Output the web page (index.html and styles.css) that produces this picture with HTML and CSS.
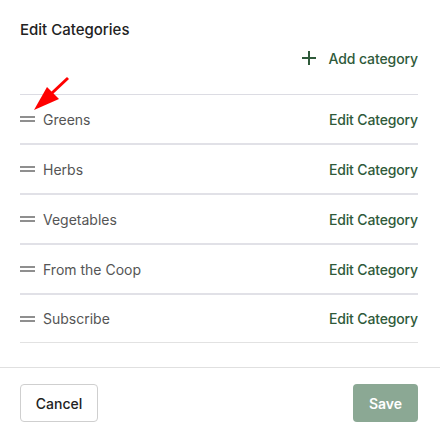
FILE: index.html
```html
<!DOCTYPE html>
<html>
<head>
<meta charset="utf-8">
<link rel="stylesheet" href="styles.css">
</head>
<body>
<div class="dialog">
  <div class="content">
    <h1 class="title">Edit Categories</h1>
    <div class="add-row">
      <button class="add-btn">
        <svg class="plus" width="14" height="14" viewBox="0 0 14 14"><path d="M7 0v14M0 7h14" stroke="#2f5a3a" stroke-width="2"/></svg>
        <span>Add category</span>
      </button>
    </div>
    <ul class="list">
      <li class="row"><span class="handle"></span><span class="name">Greens</span><a class="edit">Edit Category</a></li>
      <li class="row"><span class="handle"></span><span class="name">Herbs</span><a class="edit">Edit Category</a></li>
      <li class="row"><span class="handle"></span><span class="name">Vegetables</span><a class="edit">Edit Category</a></li>
      <li class="row"><span class="handle"></span><span class="name">From the Coop</span><a class="edit">Edit Category</a></li>
      <li class="row"><span class="handle"></span><span class="name">Subscribe</span><a class="edit">Edit Category</a></li>
    </ul>
  </div>
  <div class="footer">
    <button class="btn cancel">Cancel</button>
    <button class="btn save">Save</button>
  </div>
  <svg class="arrow" width="80" height="120" viewBox="0 0 80 120">
    <line x1="68" y1="78" x2="52" y2="93" stroke="#ff0000" stroke-width="3"/>
    <polygon points="34,110 47,87 59,99" fill="#ff0000"/>
  </svg>
</div>
</body>
</html>
```
FILE: styles.css
```css
html, body {
  margin: 0;
  padding: 0;
  background: #ffffff;
  font-family: Inter, "Liberation Sans", sans-serif;
}
.dialog {
  position: relative;
  width: 440px;
  height: 433px;
}
.content {
  padding: 20px 22px 0 20px;
}
.title {
  margin: 0;
  font-size: 15px;
  line-height: 20px;
  font-weight: 500;
  color: #222222;
}
.add-row {
  display: flex;
  justify-content: flex-end;
  margin-top: 8px;
  height: 20px;
  margin-bottom: 26px;
}
.add-btn {
  display: flex;
  align-items: center;
  gap: 13px;
  border: none;
  background: none;
  padding: 0;
  font-family: inherit;
  font-size: 14px;
  font-weight: 500;
  letter-spacing: -0.1px;
  color: #2f5a3a;
}
.list {
  list-style: none;
  margin: 0;
  padding: 0;
  border-top: 1px solid #dcdce3;
}
.row {
  display: flex;
  align-items: center;
  height: 48px;
  border-bottom: 2px solid #e1e1e7;
}
.row:last-child {
  height: 47px;
  border-bottom: 1px solid #e2e2e2;
}
.handle {
  width: 15px;
  height: 2px;
  border-top: 2px solid #8f8f8f;
  border-bottom: 2px solid #8f8f8f;
  margin-right: 8px;
}
.name {
  flex: 1;
  font-size: 14px;
  color: #555555;
}
.edit {
  font-size: 14px;
  font-weight: 500;
  letter-spacing: -0.15px;
  color: #2f5a3a;
}
.footer {
  margin-top: 24px;
  border-top: 1px solid #e0e0e0;
  padding: 16px 22px 0 20px;
  display: flex;
  justify-content: space-between;
}
.btn {
  height: 38px;
  border-radius: 4px;
  font-family: inherit;
  font-size: 14px;
  font-weight: 600;
}
.cancel {
  width: 78px;
  background: #ffffff;
  border: 1px solid #cfcfcf;
  color: #222222;
  font-weight: 500;
}
.save {
  width: 65px;
  background: #8ba894;
  border: none;
  color: #ffffff;
}
.arrow {
  position: absolute;
  left: 0;
  top: 0;
  pointer-events: none;
}
```
